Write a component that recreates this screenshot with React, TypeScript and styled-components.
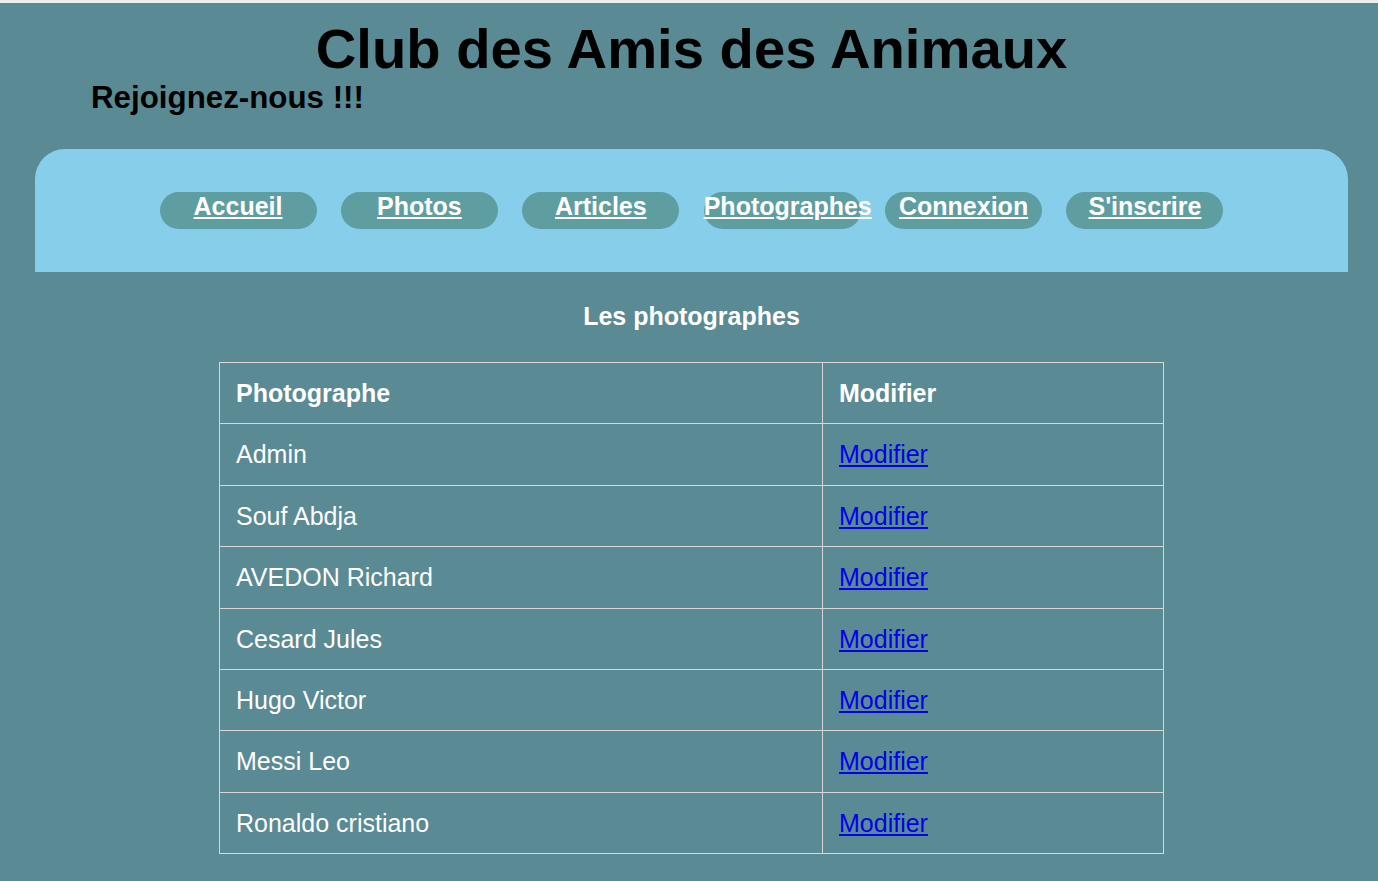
import React from 'react';
import styled, { createGlobalStyle } from 'styled-components';

const GlobalStyle = createGlobalStyle`
    html, body {
        margin: 0;
        padding: 0;
        background-color: #5a8a94;
    }
    body {
        font-family: "Liberation Sans", Arial, sans-serif;
    }
`;

const Page = styled.div`
    min-height: 100vh;
    box-sizing: border-box;
    border-top: 3px solid #eeeeee;
    background-color: #5a8a94;
    padding: 0 30px 28px 35px;
`;

const Title = styled.h1`
    margin: 13px 0 0;
    font-size: 56.2px;
    font-weight: bold;
    line-height: normal;
    text-align: center;
    color: black;
`;

const Subtitle = styled.h2`
    margin: -1px 0 0 56px;
    font-size: 31.3px;
    font-weight: bold;
    line-height: normal;
    color: black;
`;

const Nav = styled.nav`
    margin-top: 33px;
    height: 123px;
    background-color: #87ceeb;
    border-radius: 30px 30px 0 0;
    display: flex;
    justify-content: center;
    align-items: center;
    gap: 24.4px;
`;

const NavItem = styled.div`
    width: 157px;
    height: 37px;
    border-radius: 19px;
    background-color: #5f9ea0;
    text-align: center;
    white-space: nowrap;
`;

const NavLink = styled.a`
    color: white;
    font-size: 25px;
    font-weight: bold;
    line-height: normal;
    text-decoration: underline;
`;

const SectionTitle = styled.h3`
    margin: 30px 0 0;
    font-size: 25px;
    font-weight: bold;
    line-height: normal;
    text-align: center;
    color: white;
`;

const Table = styled.table`
    margin: 31px auto 0;
    width: 945px;
    border-collapse: collapse;
    table-layout: fixed;
    color: white;
    font-size: 25px;
`;

const Cell = styled.td`
    border: 1px solid #d6d6d6;
    padding: 16px;
    line-height: 28.4px;
    text-align: left;
`;

const HeadCell = styled(Cell).attrs({ as: 'th' })`
    font-weight: bold;
`;

const EditLink = styled.a`
    color: #0000ee;
    text-decoration: underline;
`;

const links = ['Accueil', 'Photos', 'Articles', 'Photographes', 'Connexion', "S'inscrire"];

const photographers = [
    'Admin',
    'Souf Abdja',
    'AVEDON Richard',
    'Cesard Jules',
    'Hugo Victor',
    'Messi Leo',
    'Ronaldo cristiano',
];

function App() {
    return (
        <Page>
            <GlobalStyle />
            <Title>Club des Amis des Animaux</Title>
            <Subtitle>Rejoignez-nous !!!</Subtitle>
            <Nav>
                {links.map(l => (
                    <NavItem key={l}>
                        <NavLink href="#">{l}</NavLink>
                    </NavItem>
                ))}
            </Nav>
            <SectionTitle>Les photographes</SectionTitle>
            <Table>
                <colgroup>
                    <col style={{ width: 603 }} />
                    <col />
                </colgroup>
                <thead>
                    <tr>
                        <HeadCell>Photographe</HeadCell>
                        <HeadCell>Modifier</HeadCell>
                    </tr>
                </thead>
                <tbody>
                    {photographers.map(p => (
                        <tr key={p}>
                            <Cell>{p}</Cell>
                            <Cell>
                                <EditLink href="#">Modifier</EditLink>
                            </Cell>
                        </tr>
                    ))}
                </tbody>
            </Table>
        </Page>
    );
}

export default App;
